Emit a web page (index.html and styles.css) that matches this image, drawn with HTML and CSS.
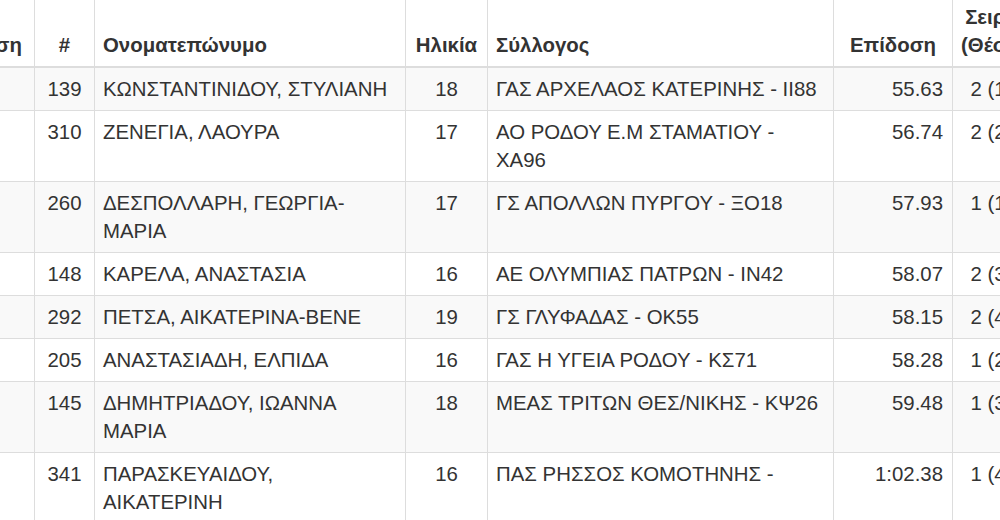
FILE: index.html
```html
<!DOCTYPE html>
<html lang="el">
<head>
<meta charset="utf-8">
<title>Αποτελέσματα</title>
<link rel="stylesheet" href="styles.css">
</head>
<body>
<div class="viewport">
<table class="results">
  <colgroup>
    <col class="c-pos">
    <col class="c-num">
    <col class="c-name">
    <col class="c-age">
    <col class="c-club">
    <col class="c-time">
    <col class="c-heat">
  </colgroup>
  <thead>
    <tr>
      <th class="right">Θέση</th>
      <th class="center">#</th>
      <th>Ονοματεπώνυμο</th>
      <th class="center">Ηλικία</th>
      <th>Σύλλογος</th>
      <th class="center">Επίδοση</th>
      <th class="center">Σειρά (Θέση)</th>
    </tr>
  </thead>
  <tbody>
    <tr><td></td><td class="center">139</td><td>ΚΩΝΣΤΑΝΤΙΝΙΔΟΥ, ΣΤΥΛΙΑΝΗ</td><td class="center">18</td><td>ΓΑΣ ΑΡΧΕΛΑΟΣ ΚΑΤΕΡΙΝΗΣ - ΙΙ88</td><td class="right">55.63</td><td class="center">2 (1)</td></tr>
    <tr><td></td><td class="center">310</td><td>ΖΕΝΕΓΙΑ, ΛΑΟΥΡΑ</td><td class="center">17</td><td>ΑΟ ΡΟΔΟΥ Ε.Μ ΣΤΑΜΑΤΙΟΥ -<br>ΧΑ96</td><td class="right">56.74</td><td class="center">2 (2)</td></tr>
    <tr><td></td><td class="center">260</td><td>ΔΕΣΠΟΛΛΑΡΗ, ΓΕΩΡΓΙΑ-<br>ΜΑΡΙΑ</td><td class="center">17</td><td>ΓΣ ΑΠΟΛΛΩΝ ΠΥΡΓΟΥ - ΞΟ18</td><td class="right">57.93</td><td class="center">1 (1)</td></tr>
    <tr><td></td><td class="center">148</td><td>ΚΑΡΕΛΑ, ΑΝΑΣΤΑΣΙΑ</td><td class="center">16</td><td>ΑΕ ΟΛΥΜΠΙΑΣ ΠΑΤΡΩΝ - ΙΝ42</td><td class="right">58.07</td><td class="center">2 (3)</td></tr>
    <tr><td></td><td class="center">292</td><td>ΠΕΤΣΑ, ΑΙΚΑΤΕΡΙΝΑ-ΒΕΝΕ</td><td class="center">19</td><td>ΓΣ ΓΛΥΦΑΔΑΣ - ΟΚ55</td><td class="right">58.15</td><td class="center">2 (4)</td></tr>
    <tr><td></td><td class="center">205</td><td>ΑΝΑΣΤΑΣΙΑΔΗ, ΕΛΠΙΔΑ</td><td class="center">16</td><td>ΓΑΣ Η ΥΓΕΙΑ ΡΟΔΟΥ - ΚΣ71</td><td class="right">58.28</td><td class="center">1 (2)</td></tr>
    <tr><td></td><td class="center">145</td><td>ΔΗΜΗΤΡΙΑΔΟΥ, ΙΩΑΝΝΑ<br>ΜΑΡΙΑ</td><td class="center">18</td><td>ΜΕΑΣ ΤΡΙΤΩΝ ΘΕΣ/ΝΙΚΗΣ - ΚΨ26</td><td class="right">59.48</td><td class="center">1 (3)</td></tr>
    <tr><td></td><td class="center">341</td><td>ΠΑΡΑΣΚΕΥΑΙΔΟΥ,<br>ΑΙΚΑΤΕΡΙΝΗ</td><td class="center">16</td><td>ΠΑΣ ΡΗΣΣΟΣ ΚΟΜΟΤΗΝΗΣ -</td><td class="right">1:02.38</td><td class="center">1 (4)</td></tr>
  </tbody>
</table>
</div>
</body>
</html>
```

FILE: styles.css
```css
html, body {
  margin: 0;
  padding: 0;
  background: #fff;
}

.viewport {
  width: 1000px;
  height: 520px;
  overflow: hidden;
}

.results {
  border-collapse: collapse;
  table-layout: fixed;
  width: 1096px;
  margin-top: -5px;
  margin-left: -66px;
  font-family: "Liberation Sans", Arial, Helvetica, sans-serif;
  font-size: 20.4px;
  line-height: 28px;
  color: #333;
}

.c-pos { width: 100px; }
.c-num { width: 60px; }
.c-name { width: 311px; }
.c-age { width: 82px; }
.c-club { width: 346px; }
.c-time { width: 119px; }
.c-heat { width: 78px; }

.results th,
.results td {
  padding: 7px 8px;
  border: 1px solid #ddd;
  text-align: left;
  vertical-align: top;
}

.results th {
  font-weight: bold;
  vertical-align: bottom;
  border-bottom: 2px solid #ddd;
}

.results tbody tr:nth-child(odd) td {
  background: #f9f9f9;
}

.results .center { text-align: center; }
.results .right { text-align: right; }
.results th.right { padding-right: 12px; }
.results td.right { padding-right: 9px; }
.results th:last-child,
.results td:last-child { white-space: nowrap; }
.results th:last-child { white-space: normal; }
```
